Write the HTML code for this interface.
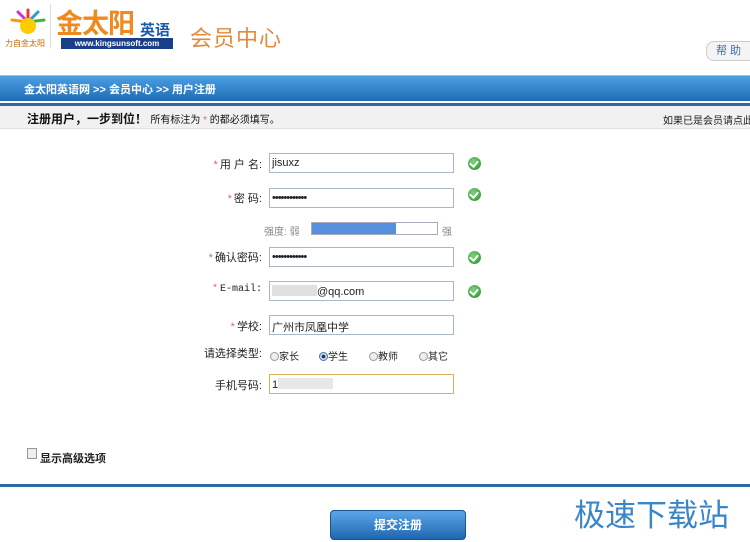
<!DOCTYPE html>
<html><head><meta charset="utf-8"><style>
*{margin:0;padding:0;box-sizing:border-box}
body{width:750px;height:542px;background:#fff;position:relative;overflow:hidden;font-family:"Liberation Sans","Noto Sans CJK SC",sans-serif;font-size:11px;color:#222}
.a{position:absolute}
.lbl{position:absolute;right:488px;font-size:11px;color:#222;white-space:nowrap}
.lbl i{color:#d66;font-style:normal;margin-right:2px}
.inp{position:absolute;left:269px;width:185px;height:20px;border:1px solid #a9b7c6;font-size:11px;padding:3px 2px;background:#fff}
.ck{position:absolute;left:468px;width:13px;height:13px;border-radius:50%;background:radial-gradient(circle at 40% 35%,#7fd27f,#2a8a2a);}
.ck:after{content:"";position:absolute;left:3px;top:2px;width:4px;height:6px;border:solid #fff;border-width:0 2px 2px 0;transform:rotate(40deg)}
.rd{display:inline-block;width:9px;height:9px;border:1px solid #999;border-radius:50%;vertical-align:-1px;background:#eee}
</style></head><body>
<div class="a" style="left:8px;top:8px;width:40px;height:28px">
<svg width="40" height="30"><g stroke-width="3" stroke-linecap="round"><line x1="20" y1="14" x2="20" y2="2" stroke="#e33"/><line x1="20" y1="14" x2="30" y2="4" stroke="#39c"/><line x1="20" y1="14" x2="10" y2="4" stroke="#c3c"/><line x1="20" y1="14" x2="36" y2="12" stroke="#3b3"/><line x1="20" y1="14" x2="4" y2="12" stroke="#f90"/></g><circle cx="20" cy="18" r="8" fill="#fc0"/></svg></div>
<div class="a" style="left:5px;top:38px;font-size:8px;color:#c60">力自金太阳</div>
<div class="a" style="left:50px;top:4px;width:1px;height:44px;background:#ddd"></div>
<div class="a" style="left:56px;top:2px;font-size:27px;font-weight:bold;color:#f08a1c;letter-spacing:-1px">金太阳</div>
<div class="a" style="left:140px;top:19px;font-size:15px;font-weight:bold;color:#1a5ca8">英语</div>
<div class="a" style="left:61px;top:38px;width:112px;height:11px;background:#1a3f8a;color:#fff;font-size:8px;font-weight:bold;line-height:11px;text-align:center">www.kingsunsoft.com</div>
<div class="a" style="left:190px;top:21px;font-size:22px;color:#e08a3a;letter-spacing:1px">会员中心</div>
<div class="a" style="left:706px;top:41px;width:50px;height:20px;border:1px solid #ccc;border-radius:8px;background:#f4f4f4;color:#3a6ea8;font-size:11px;line-height:18px;padding-left:9px">帮 助</div>
<div class="a" style="left:0;top:75px;width:750px;height:26px;background:linear-gradient(#4aa0e4,#1f6cb4);border-top:1px solid #8cc4ee"></div>
<div class="a" style="left:24px;top:81px;color:#fff;font-weight:bold;font-size:11px">金太阳英语网 &gt;&gt; 会员中心 &gt;&gt; 用户注册</div>
<div class="a" style="left:0;top:101px;width:750px;height:2px;background:#fff"></div>
<div class="a" style="left:0;top:103px;width:750px;height:3px;background:#2b6aa3"></div>
<div class="a" style="left:0;top:106px;width:750px;height:23px;background:#f1f1f1;border-bottom:1px solid #e0e0e0"></div>
<div class="a" style="left:27px;top:110px;font-size:12px;font-weight:bold;color:#111">注册用户，一步到位！ <span style="font-weight:normal;font-size:10px">所有标注为 <span style="color:#d66">*</span> 的都必须填写。</span></div>
<div class="a" style="left:663px;top:112px;font-size:10px;white-space:nowrap">如果已是会员请点此</div>
<div class="lbl" style="top:156px"><i>*</i>用 户 名:</div><div class="inp" style="top:153px">jisuxz</div><div class="ck" style="top:157px"></div>
<div class="lbl" style="top:190px"><i>*</i>密 码:</div><div class="inp" style="top:188px;letter-spacing:-1px">••••••••••••</div><div class="ck" style="top:188px"></div>
<div class="a" style="left:264px;top:223px;color:#888;font-size:10px">强度: 弱</div>
<div class="a" style="left:311px;top:222px;width:127px;height:13px;border:1px solid #aab"><div style="width:84px;height:11px;background:#5590e0"></div></div>
<div class="a" style="left:442px;top:223px;color:#888;font-size:10px">强</div>
<div class="lbl" style="top:249px"><i>*</i>确认密码:</div><div class="inp" style="top:247px;letter-spacing:-1px">••••••••••••</div><div class="ck" style="top:251px"></div>
<div class="lbl" style="top:284px;font-family:'Liberation Mono',monospace;font-size:10px"><i>*</i>E-mail:</div><div class="inp" style="top:281px"><span style="display:inline-block;width:45px;height:11px;background:#e0e0e0;vertical-align:-1px"></span>@qq.com</div><div class="ck" style="top:285px"></div>
<div class="lbl" style="top:318px"><i>*</i>学校:</div><div class="inp" style="top:315px">广州市凤凰中学</div>
<div class="lbl" style="top:345px">请选择类型:</div>
<div class="a" style="left:270px;top:348px;font-size:10px;white-space:nowrap"><span class="rd"></span>家长</div>
<div class="a" style="left:319px;top:348px;font-size:10px;white-space:nowrap"><span class="rd" style="border-color:#4477aa;background:radial-gradient(#235 30%,#cde 45%)"></span>学生</div>
<div class="a" style="left:369px;top:348px;font-size:10px;white-space:nowrap"><span class="rd"></span>教师</div>
<div class="a" style="left:419px;top:348px;font-size:10px;white-space:nowrap"><span class="rd"></span>其它</div>
<div class="lbl" style="top:377px">手机号码:</div><div class="inp" style="top:374px;border-color:#d8b060">1<span style="display:inline-block;width:55px;height:11px;background:#e8e8e8;vertical-align:-1px"></span></div>
<div class="a" style="left:27px;top:448px;width:10px;height:11px;border:1px solid #999;background:#eee"></div>
<div class="a" style="left:40px;top:450px;font-size:11px;font-weight:bold">显示高级选项</div>
<div class="a" style="left:0;top:484px;width:750px;height:3px;background:#2b6aa3"></div>
<div class="a" style="left:330px;top:510px;width:136px;height:30px;border-radius:4px;background:linear-gradient(#5ca6e8,#1f66b0);border:1px solid #1a5490;color:#fff;font-weight:bold;font-size:12px;text-align:center;line-height:28px">提交注册</div>
<div class="a" style="left:574px;top:490px;font-size:31px;color:#3a86c8;letter-spacing:0px">极速下载站</div>
</body></html>
